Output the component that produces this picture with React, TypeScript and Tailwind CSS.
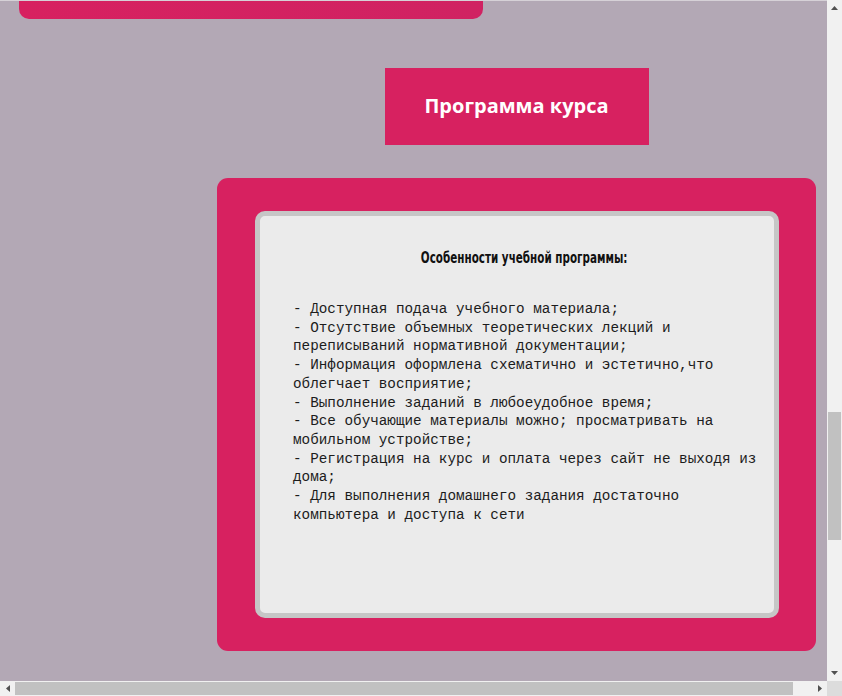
const features = [
  "- Доступная подача учебного материала;",
  "- Отсутствие объемных теоретических лекций и переписываний нормативной документации;",
  "- Информация оформлена схематично и эстетично,что облегчает восприятие;",
  "- Выполнение заданий в любоеудобное время;",
  "- Все обучающие материалы можно; просматривать на мобильном устройстве;",
  "- Регистрация на курс и оплата через сайт не выходя из дома;",
  "- Для выполнения домашнего задания достаточно компьютера и доступа к сети",
];

const Arrow = ({ dir }: { dir: "up" | "down" | "left" | "right" }) => {
  const pts = {
    up: "0,4 7,4 3.5,0",
    down: "0,0 7,0 3.5,4",
    left: "4,0 4,7 0,3.5",
    right: "0,0 0,7 4,3.5",
  }[dir];
  const vert = dir === "up" || dir === "down";
  return (
    <svg width={vert ? 7 : 4} height={vert ? 4 : 7} viewBox={vert ? "0 0 7 4" : "0 0 4 7"}>
      <polygon points={pts} fill="#505050" />
    </svg>
  );
};

const App = () => {
  return (
    <div className="w-[842px] h-[696px] flex flex-col bg-[#f1f1f1] overflow-hidden">
      <div className="flex h-[681px]">
        {/* page viewport */}
        <div className="w-[827px] h-[681px] overflow-hidden bg-[#b3a8b5]">
          <div className="h-px bg-[#d6d1d7]" />
          <div className="ml-[19px] w-[464px] h-[18px] rounded-b-[10px] bg-gradient-to-r from-[#d72160] to-[#d02262]" />

          <div className="ml-[217px] w-[599px] pt-[49px]">
            <div className="mx-auto w-[264px] h-[77px] bg-[#d72160] flex items-center justify-center pb-px">
              <h2 className="text-white text-[20px] font-bold font-['Open_Sans',sans-serif]">
                Программа курса
              </h2>
            </div>

            <div className="mt-[33px] rounded-[11px] bg-[#d72160] pt-[33px] pb-[33px] pl-[38px] pr-[37px]">
              <div className="h-[407px] rounded-[10px] border-[5px] border-[#c6c6c6] bg-[#ebebeb] pl-[33px] pt-[31px]">
                <p className="w-[462px] text-center leading-[20px]">
                  <span className="inline-block scale-x-[0.77] text-[15px] font-bold text-[#111] font-['DejaVu_Sans_Condensed','DejaVu_Sans',sans-serif] font-stretch-condensed">
                    Особенности учебной программы:
                  </span>
                </p>
                <div className="mt-[32px] w-[472px] text-[14.3px] leading-[18.7px] text-[#1c1c1c] font-['Liberation_Mono',monospace]">
                  {features.map((f) => (
                    <p key={f}>{f}</p>
                  ))}
                </div>
              </div>
            </div>
          </div>
        </div>

        {/* vertical scrollbar */}
        <div className="w-[15px] h-[681px] flex flex-col items-center bg-[#f1f1f1]">
          <div className="h-[15px] w-full flex items-center justify-center pt-px">
            <Arrow dir="up" />
          </div>
          <div className="flex-1 w-full px-px">
            <div className="mt-[397px] h-[128px] w-[13px] bg-[#c1c1c1]" />
          </div>
          <div className="h-[15px] w-full flex items-center justify-center pb-px">
            <Arrow dir="down" />
          </div>
        </div>
      </div>

      {/* horizontal scrollbar */}
      <div className="flex h-[15px]">
        <div className="w-[827px] h-[15px] flex items-center bg-[#f1f1f1]">
          <div className="w-[15px] h-full flex items-center justify-center">
            <Arrow dir="left" />
          </div>
          <div className="flex-1 h-full py-px">
            <div className="w-[778px] h-[13px] bg-[#c1c1c1]" />
          </div>
          <div className="w-[15px] h-full flex items-center justify-center">
            <Arrow dir="right" />
          </div>
        </div>
        <div className="w-[15px] h-[15px] bg-[#dcdcdc]" />
      </div>
    </div>
  );
};

export default App;
